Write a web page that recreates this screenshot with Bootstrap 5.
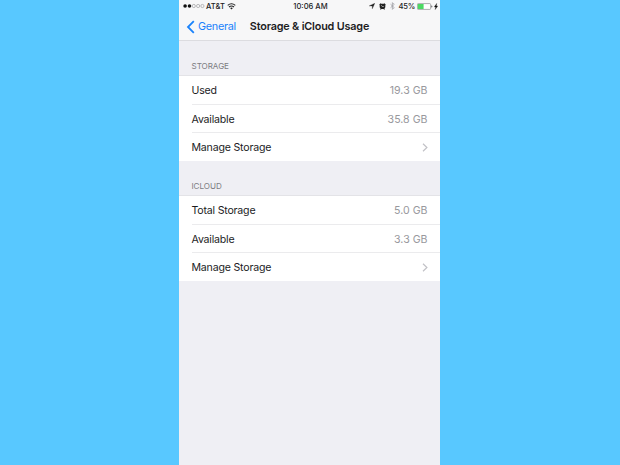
<!DOCTYPE html>
<html lang="en">
<head>
<meta charset="utf-8">
<meta name="viewport" content="width=device-width, initial-scale=1">
<title>Storage &amp; iCloud Usage</title>
<link href="https://cdn.jsdelivr.net/npm/bootstrap@5.3.0/dist/css/bootstrap.min.css" rel="stylesheet">
<style>
body{background:#58c8ff;font-family:Inter,"Liberation Sans",sans-serif;color:#1c1c1e;font-size:10.6px;line-height:1.2;padding-right:1px}
.phone{width:261px;height:465px;background:#efeff4}
.top-area{height:41px;background:#f7f7f8;border-bottom:1px solid #dcdce0}
.status-line,.title-line{display:grid;grid-template-columns:1fr auto 1fr;align-items:center}
.status-line{height:13px;padding:0 2px 0 4px;font-size:7.6px;font-weight:500}
.signal-gap{margin-left:1px}
.battery-text{margin-left:3px;letter-spacing:-.2px}
.icon-gap{margin-left:4px}
.tight-gap{margin-left:2px}
.title-line{height:28px;padding:0 7px 0 7px}
.title-line h1{font-size:10.8px;font-weight:600;line-height:1.2;letter-spacing:-.16px}
.back-link{color:#1a82fb;font-size:10.8px;letter-spacing:-.26px}
.back-text{margin-left:3px}
.section-head{height:35px;padding:0 12.5px 4.5px;font-size:8.1px;color:#7d7d82;letter-spacing:-.05px}
.list-group{--bs-list-group-bg:#fff;--bs-list-group-color:#1c1c1e}
.list-back{height:85px;background:#fff;box-shadow:0 -1px #e3e3e7}
.list-group .list-group-item{height:28px;border:0;margin-left:12.5px;padding:2px 12.5px 0 0;letter-spacing:-.2px}
.list-group .list-group-item+.list-group-item{border-top:1px solid #ebebed;padding-top:3px}
.list-group .list-group-item:last-child{height:29px}
.list-group .list-group-item svg{margin-bottom:3px}
.list-group .amount{color:#98989d;letter-spacing:0}
svg{display:block;flex:none}
</style>
</head>
<body class="m-0 overflow-hidden">
<main class="phone mx-auto">
  <header class="top-area">
    <div class="status-line">
      <div class="d-flex align-items-center">
        <svg width="22" height="6" viewBox="0 0 22 6"><g fill="#111"><circle cx="2.1" cy="3" r="1.8"/><circle cx="6.5" cy="3" r="1.8"/></g><g fill="none" stroke="#929294" stroke-width=".6"><circle cx="10.8" cy="3" r="1.6"/><circle cx="15.1" cy="3" r="1.6"/><circle cx="19.4" cy="3" r="1.6"/></g></svg>
        <span class="signal-gap">AT&amp;T</span>
        <svg class="tight-gap" width="9" height="7" viewBox="0 0 9 7"><path d="M.7 2.4Q4.5-.9 8.3 2.4M2 4Q4.5 1.9 7 4" fill="none" stroke="#222" stroke-width="1.1"/><path d="M3.1 5Q4.5 3.9 5.9 5L4.5 6.6z" fill="#222"/></svg>
      </div>
      <span>10:06 AM</span>
      <div class="d-flex align-items-center justify-content-end">
        <svg width="6" height="6" viewBox="0 0 6 6"><path d="M5.8.2 3.3 5.8V2.9H.2z" fill="#222" stroke="#222" stroke-width=".3"/></svg>
        <svg class="icon-gap" width="7" height="7" viewBox="0 0 7 7"><path d="M.3 1.4 1.6.3 2.3.8H4.7L5.4.3 6.7 1.4 6.3 2.5Q6.8 4.4 5.5 5.5L6 6.5H5L4.5 6.1H2.5L2 6.5H1l.5-1Q.2 4.4.7 2.5z" fill="#222"/><path d="M2.2 2.4 3.5 3.5H4.7" fill="none" stroke="#eee" stroke-width=".7"/></svg>
        <svg class="icon-gap" width="5" height="8" viewBox="0 0 5 8"><path d="M.5 2.2 4.2 5.6 2.4 7.4V.6L4.2 2.4.5 5.8" fill="none" stroke="#a0a0a4" stroke-width=".8"/></svg>
        <span class="battery-text">45%</span>
        <svg class="tight-gap" width="16" height="7" viewBox="0 0 16 7"><rect x=".4" y=".6" width="13.2" height="5.8" rx=".8" fill="#fff" stroke="#77777a" stroke-width=".6"/><path d="M.8 1H6.6V6H.8z" fill="#4cd964"/><path d="M14.3 2.4Q15.4 2.5 15.4 3.5T14.3 4.6z" fill="#555"/></svg>
        <svg class="signal-gap" width="4" height="7" viewBox="0 0 4 7"><path d="M2.7.4.3 3.9H1.7L1.2 6.6 3.7 3H2.3z" fill="#111" stroke="#111" stroke-width=".3"/></svg>
      </div>
    </div>
    <div class="title-line">
      <a class="back-link d-flex align-items-center text-decoration-none" href="#">
        <svg width="9" height="14" viewBox="0 0 9 14"><path d="M7.8 1.2 2 7l5.8 5.8" fill="none" stroke="#1a82fb" stroke-width="1.8"/></svg>
        <span class="back-text">General</span>
      </a>
      <h1 class="m-0">Storage &amp; iCloud Usage</h1>
    </div>
  </header>
  <section>
    <h2 class="section-head d-flex align-items-end m-0 fw-normal">STORAGE</h2>
    <div class="list-back"><ul class="list-group list-group-flush rounded-0">
      <li class="list-group-item d-flex align-items-center justify-content-between"><span>Used</span><span class="amount">19.3 GB</span></li>
      <li class="list-group-item d-flex align-items-center justify-content-between"><span>Available</span><span class="amount">35.8 GB</span></li>
      <li class="list-group-item d-flex align-items-center justify-content-between"><span>Manage Storage</span><svg width="6" height="9" viewBox="0 0 6 9"><path d="M1 .8 4.9 4.5 1 8.2" fill="none" stroke="#c2c2c7" stroke-width="1.2"/></svg></li>
    </ul></div>
  </section>
  <section>
    <h2 class="section-head d-flex align-items-end m-0 fw-normal">ICLOUD</h2>
    <div class="list-back"><ul class="list-group list-group-flush rounded-0">
      <li class="list-group-item d-flex align-items-center justify-content-between"><span>Total Storage</span><span class="amount">5.0 GB</span></li>
      <li class="list-group-item d-flex align-items-center justify-content-between"><span>Available</span><span class="amount">3.3 GB</span></li>
      <li class="list-group-item d-flex align-items-center justify-content-between"><span>Manage Storage</span><svg width="6" height="9" viewBox="0 0 6 9"><path d="M1 .8 4.9 4.5 1 8.2" fill="none" stroke="#c2c2c7" stroke-width="1.2"/></svg></li>
    </ul></div>
  </section>
</main>
<script src="https://cdn.jsdelivr.net/npm/bootstrap@5.3.0/dist/js/bootstrap.bundle.min.js"></script>
</body>
</html>
